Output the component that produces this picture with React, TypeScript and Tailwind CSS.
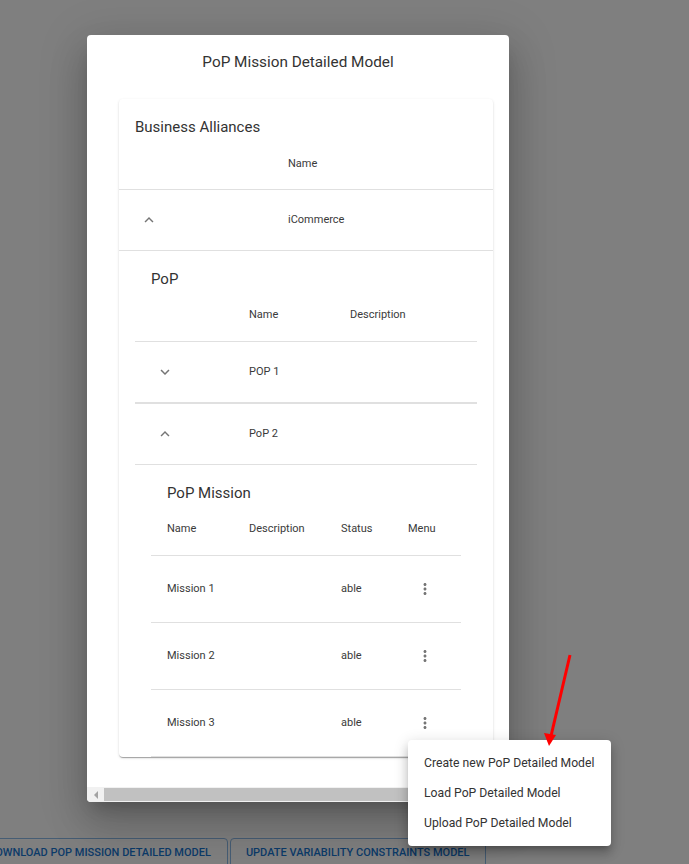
import React from "react";

const font = { fontFamily: "Roboto, 'Liberation Sans', sans-serif" };

const ChevronUp = () => (
  <svg viewBox="0 0 24 24" className="w-[18px] h-[18px] ml-[21px] fill-[#757575]">
    <path d="M7.41 15.41 12 10.83l4.59 4.58L18 14l-6-6-6 6z" />
  </svg>
);

const ChevronDown = () => (
  <svg viewBox="0 0 24 24" className="w-[18px] h-[18px] ml-[21px] fill-[#757575]">
    <path d="M7.41 8.59 12 13.17l4.59-4.58L18 10l-6 6-6-6z" />
  </svg>
);

const MoreVert = () => (
  <svg viewBox="0 0 24 24" className="w-[18px] h-[18px] ml-[24px] fill-[#757575]">
    <path d="M12 8c1.1 0 2-.9 2-2s-.9-2-2-2-2 .9-2 2 .9 2 2 2m0 2c-1.1 0-2 .9-2 2s.9 2 2 2 2-.9 2-2-.9-2-2-2m0 6c-1.1 0-2 .9-2 2s.9 2 2 2 2-.9 2-2-.9-2-2-2" />
  </svg>
);

const missions = ["Mission 1", "Mission 2", "Mission 3"];

const MissionBlock = () => (
  <div>
    <div className="pl-4 pt-[17px] h-[38px] text-[15px] leading-[22px] text-[#333]">PoP Mission</div>
    <div className="flex items-center h-[53px] border-b border-[#e0e0e0] text-[11px] text-[#3a3a3a]">
      <div className="w-[82px] pl-4">Name</div>
      <div className="w-[92px] pl-4">Description</div>
      <div className="w-[67px] pl-4">Status</div>
      <div className="pl-4">Menu</div>
    </div>
    {missions.map((m) => (
      <div key={m} className="flex items-center h-[67px] border-b border-[#e0e0e0] text-[11px] text-[#3a3a3a]">
        <div className="w-[82px] pl-4">{m}</div>
        <div className="w-[92px] pl-4"></div>
        <div className="w-[67px] pl-4">able</div>
        <div className="flex-1">
          <MoreVert />
        </div>
      </div>
    ))}
  </div>
);

const PopBlock = () => (
  <div>
    <div className="pl-4 pt-[17px] h-[38px] text-[15px] leading-[22px] text-[#333]">PoP</div>
    <div className="flex items-center h-[53px] border-b border-[#e0e0e0] text-[11px] text-[#3a3a3a]">
      <div className="w-[98px]"></div>
      <div className="w-[101px] pl-4">Name</div>
      <div className="pl-4">Description</div>
    </div>
    <div className="flex items-center h-[62px] border-b-2 border-[#e0e0e0] text-[11px] text-[#3a3a3a]">
      <div className="w-[98px]">
        <ChevronDown />
      </div>
      <div className="w-[101px] pl-4">POP 1</div>
    </div>
    <div className="flex items-center h-[61px] border-b border-[#e0e0e0] text-[11px] text-[#3a3a3a]">
      <div className="w-[98px]">
        <ChevronUp />
      </div>
      <div className="w-[101px] pl-4">PoP 2</div>
    </div>
    <div className="px-4">
      <MissionBlock />
    </div>
  </div>
);

export default function App() {
  return (
    <div className="relative w-full h-[864px] overflow-hidden bg-white" style={font}>
      <div className="pt-[838px] flex -ml-[29px]">
        <button className="h-[30px] pl-4 pr-4 border border-[#8cbae8] rounded text-[11px] font-medium text-[#1976d2] whitespace-nowrap">
          DOWNLOAD POP MISSION DETAILED MODEL
        </button>
        <button className="h-[30px] ml-[2px] px-[15px] border border-[#8cbae8] rounded text-[11px] font-medium text-[#1976d2] whitespace-nowrap">
          UPDATE VARIABILITY CONSTRAINTS MODEL
        </button>
      </div>

      <div className="absolute inset-0 bg-black/50"></div>

      <div className="absolute left-[87px] top-[35px] w-[422px] h-[767px] bg-white rounded overflow-hidden shadow-[0_11px_15px_-7px_rgba(0,0,0,0.2),0_24px_38px_3px_rgba(0,0,0,0.14),0_9px_46px_8px_rgba(0,0,0,0.12)] flex flex-col">
        <div className="pt-4 text-center text-[15.3px] leading-[22px] text-[#333]">PoP Mission Detailed Model</div>
        <div className="mt-[26px] ml-8 w-[374px] bg-white rounded shadow-[0_2px_1px_-1px_rgba(0,0,0,0.2),0_1px_1px_0_rgba(0,0,0,0.14),0_1px_3px_0_rgba(0,0,0,0.12)]">
          <div className="pl-4 pt-[17px] h-[40px] text-[15px] leading-[22px] text-[#333]">Business Alliances</div>
          <div className="flex items-center h-[51px] border-b border-[#e0e0e0] text-[11px] text-[#3a3a3a]">
            <div className="w-[153px]"></div>
            <div className="pl-4">Name</div>
          </div>
          <div className="flex items-center h-[61px] border-b border-[#e0e0e0] text-[11px] text-[#3a3a3a]">
            <div className="w-[153px]">
              <ChevronUp />
            </div>
            <div className="pl-4">iCommerce</div>
          </div>
          <div className="px-4">
            <PopBlock />
          </div>
        </div>
        <div className="mt-auto h-[15px] bg-[#f1f1f1] flex items-center">
          <div className="w-[17px] flex justify-center">
            <div className="w-0 h-0 border-y-[4px] border-y-transparent border-r-[4px] border-r-[#a3a3a3]"></div>
          </div>
          <div className="h-[13px] w-[380px] bg-[#c1c1c1]"></div>
        </div>
      </div>

      <div className="absolute left-[408px] top-[740px] w-[203px] py-2 bg-white rounded shadow-[0_5px_5px_-3px_rgba(0,0,0,0.2),0_8px_10px_1px_rgba(0,0,0,0.14),0_3px_14px_2px_rgba(0,0,0,0.12)]">
        {["Create new PoP Detailed Model", "Load PoP Detailed Model", "Upload PoP Detailed Model"].map((t) => (
          <div key={t} className="h-[30px] px-4 flex items-center text-[12.2px] text-[#333] whitespace-nowrap">
            {t}
          </div>
        ))}
      </div>

      <svg className="absolute left-[540px] top-[650px] w-[40px] h-[100px]" viewBox="0 0 40 100">
        <line x1="30" y1="5" x2="11" y2="86" stroke="#ff0000" strokeWidth="3" />
        <polygon points="9,96 4,83 16,85" fill="#ff0000" />
      </svg>
    </div>
  );
}
